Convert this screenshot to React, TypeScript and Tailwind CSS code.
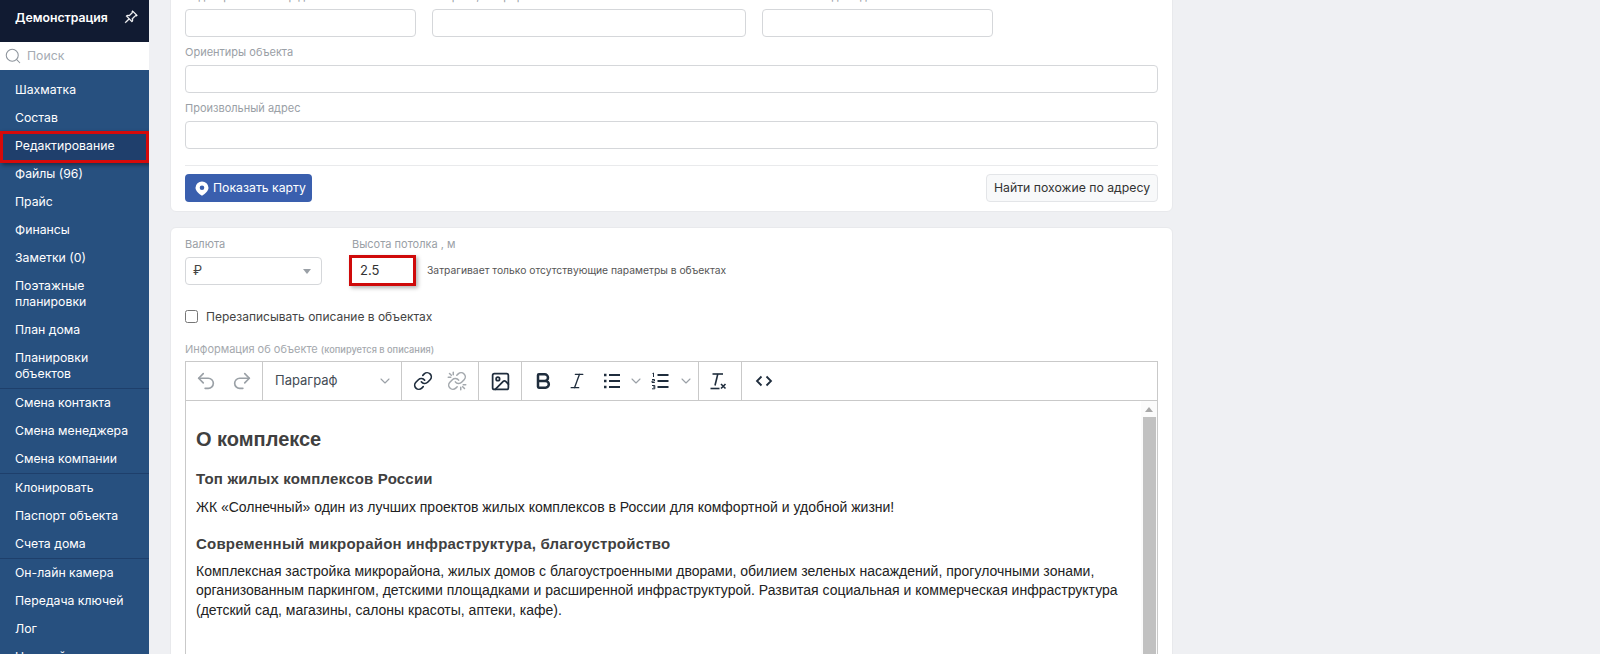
import React from "react";
import { BsPinAngle } from "react-icons/bs";
import { Bold, ChevronDown, Image, Italic, Link, Redo2, Search, Undo2 } from "lucide-react";

const menuGroups = [
  [
    "Шахматка",
    "Состав",
    "Редактирование",
    "Файлы (96)",
    "Прайс",
    "Финансы",
    "Заметки (0)",
    "Поэтажные планировки",
    "План дома",
    "Планировки объектов",
  ],
  ["Смена контакта", "Смена менеджера", "Смена компании"],
  ["Клонировать", "Паспорт объекта", "Счета дома"],
  ["Он-лайн камера", "Передача ключей", "Лог", "Настройки"],
];

const Sidebar: React.FC = () => (
  <aside className="w-[149px] shrink-0 h-full flex flex-col bg-[#27507f] overflow-hidden">
    <div className="h-[42px] shrink-0 bg-[#111b32] flex justify-between pl-[15px] pr-[11px] pt-[10px] text-white">
      <span className="text-[12.25px] leading-[16px] font-semibold">Демонстрация</span>
      <BsPinAngle className="w-[14px] h-[14px]" strokeWidth={0.5} />
    </div>
    <div className="h-[28px] shrink-0 bg-white flex items-center pl-[4px] gap-[5px]">
      <Search className="w-[18px] h-[18px] text-[#8d949c]" strokeWidth={1.4} />
      <span className="text-[12.25px] text-[#a5abb3]">Поиск</span>
    </div>
    <nav className="pt-[6px]">
      {menuGroups.map((group, i) => (
        <div key={i} className="border-b border-[#1e3f6b] last:border-b-0">
          {group.map((item) => {
            const active = item === "Редактирование";
            return (
              <div
                key={item}
                className={
                  active
                    ? "relative bg-[#1f3f6c] px-[15px] py-[6px] text-[12.25px] leading-[16px] text-white"
                    : "px-[15px] py-[6px] text-[12.25px] leading-[16px] text-white"
                }
              >
                {item}
                {active && (
                  <div className="absolute left-0 right-0 -top-[1px] -bottom-[3px] border-[3px] border-[#d60a0a] shadow-[2px_2px_4px_rgba(0,0,0,0.4)]" />
                )}
              </div>
            );
          })}
        </div>
      ))}
    </nav>
  </aside>
);

const Field: React.FC<{ label: string; className?: string }> = ({ label, className }) => (
  <div className={className}>
    <div className="text-[11px] leading-[16px] text-[#9aa0a6] mb-[5px]">{label}</div>
    <div className="h-[28px] bg-white border border-[#d5d7da] rounded-[4px]" />
  </div>
);

const PlaceIcon = () => (
  <svg width="14" height="15" viewBox="0 0 14 15" fill="currentColor">
    <path
      fillRule="evenodd"
      d="M7 .5a6.5 6.5 0 0 1 6.5 6.3c0 3.2-3.6 6.2-6.5 7.9C4.100 13 .5 10 .5 6.800A6.500 6.500 0 0 1 7 .5zm0 4a2.300 2.300 0 1 0 0 4.600 2.300 2.300 0 0 0 0-4.600z"
    />
  </svg>
);

const UnlinkIcon = () => (
  <svg width="20" height="20" viewBox="0 0 24 24" fill="none" stroke="currentColor" strokeWidth="1.8" strokeLinecap="round">
    <path d="M10 13a5 5 0 0 0 7.540.540l3-3a5 5 0 0 0-7.070-7.070l-1.720 1.710" />
    <path d="M14 11a5 5 0 0 0-7.540-.540l-3 3a5 5 0 0 0 7.070 7.070l1.710-1.710" />
    <path d="M7.500 1.500v3M1.500 7.500h3M3 3l2.200 2.200" />
    <path d="M16.500 22.500v-3M22.500 16.500h-3M21 21l-2.200-2.200" />
  </svg>
);

const ListIcon = () => (
  <svg width="20" height="20" viewBox="0 0 20 20" fill="none" stroke="#1f2d3d" strokeWidth="2">
    <path d="M7 4h11M7 10h11M7 16h11" />
    <path d="M2 4h2.500M2 10h2.500M2 16h2.500" strokeWidth="2.500" strokeDasharray="2.500 0" />
  </svg>
);

const OrderedListIcon = () => (
  <svg width="20" height="20" viewBox="0 0 20 20" fill="none" stroke="#1f2d3d">
    <path d="M7.500 4h11M7.500 10h11M7.500 16h11" strokeWidth="2" />
    <path d="M2.500 2.500 3.500 2v4M2 8.500h2.500v1.500H2v1.500h2.800M2 14.500h2.800v1.500H3M4.800 16v1.800H2" strokeWidth="1" />
  </svg>
);

const ClearFormat = () => (
  <svg width="20" height="20" viewBox="0 0 20 20" fill="none" stroke="#1f2d3d" strokeWidth="1.6">
    <path d="M2.500 3h10.500" />
    <path d="M7.800 3 5 14.500" />
    <path d="M.5 17.500h9" />
    <path d="m11 13 4.500 4.500M15.500 13 11 17.500" />
  </svg>
);

const CodeIcon = () => (
  <svg width="20" height="20" viewBox="0 0 20 20" fill="none" stroke="#1f2d3d" strokeWidth="1.8">
    <path d="M7.500 5.500 3 10l4.500 4.500" />
    <path d="M12.500 5.500 17 10l-4.500 4.500" />
  </svg>
);

const Toolbar: React.FC = () => (
  <div className="h-[39px] flex border-b border-[#c9c9c9] text-[#1f2d3d] font-['Inter',sans-serif]">
    <div className="w-[77px] shrink-0 flex items-center pl-[2px] border-r border-[#c9c9c9] text-[#9aa0a6]">
      <div className="w-[36px] flex justify-center">
        <Undo2 className="w-[22px] h-[22px]" strokeWidth={1.8} />
      </div>
      <div className="w-[36px] flex justify-center">
        <Redo2 className="w-[22px] h-[22px]" strokeWidth={1.8} />
      </div>
    </div>
    <div className="w-[139px] shrink-0 flex items-center justify-between pl-[12px] pr-[8px] border-r border-[#c9c9c9]">
      <span className="text-[13px] text-[#444c55]">Параграф</span>
      <ChevronDown className="w-[16px] h-[16px] text-[#9aa0a6]" strokeWidth={1.6} />
    </div>
    <div className="w-[77px] shrink-0 flex items-center pl-[4px] border-r border-[#c9c9c9]">
      <div className="w-[34px] flex justify-center">
        <Link className="w-[20px] h-[20px]" strokeWidth={2} />
      </div>
      <div className="w-[34px] flex justify-center text-[#a3a8ad]">
        <UnlinkIcon />
      </div>
    </div>
    <div className="w-[43px] shrink-0 flex items-center justify-center border-r border-[#c9c9c9]">
      <Image className="w-[21px] h-[21px]" strokeWidth={2} />
    </div>
    <div className="w-[177px] shrink-0 flex items-center pl-[4px] border-r border-[#c9c9c9]">
      <div className="w-[34px] flex justify-center">
        <Bold className="w-[20px] h-[20px]" strokeWidth={3} />
      </div>
      <div className="w-[34px] flex justify-center">
        <Italic className="w-[20px] h-[20px]" strokeWidth={1.6} />
      </div>
      <div className="w-[35px] flex justify-center">
        <ListIcon />
      </div>
      <div className="w-[14px] flex justify-center text-[#9aa0a6]">
        <ChevronDown className="w-[16px] h-[16px] shrink-0" strokeWidth={1.6} />
      </div>
      <div className="w-[34px] flex justify-center">
        <OrderedListIcon />
      </div>
      <div className="w-[18px] flex justify-center text-[#9aa0a6]">
        <ChevronDown className="w-[16px] h-[16px] shrink-0" strokeWidth={1.6} />
      </div>
    </div>
    <div className="w-[43px] shrink-0 flex items-center justify-center border-r border-[#c9c9c9]">
      <ClearFormat />
    </div>
    <div className="w-[43px] shrink-0 flex items-center justify-center">
      <CodeIcon />
    </div>
  </div>
);

const App: React.FC = () => {
  return (
    <div className="h-screen flex overflow-hidden bg-[#eff0f3] font-['Inter',sans-serif]">
      <Sidebar />
      <main className="w-[1003px] shrink-0 ml-[21px] -mt-[27px] flex flex-col gap-[15px]">
        <section className="bg-white border border-[#e8e9ec] rounded-[6px] px-[14px] pt-[14px] pb-[9px]">
          <div className="flex gap-[16px]">
            <Field label="Кадастровый номер дома" className="w-[231px]" />
            <Field label="Квартал, микрорайон" className="w-[314px]" />
            <Field label="Почтовый индекс дома" className="w-[231px]" />
          </div>
          <Field label="Ориентиры объекта" className="mt-[7px]" />
          <Field label="Произвольный адрес" className="mt-[7px]" />
          <div className="mt-[16px] pt-[8px] border-t border-[#e9eaec] flex justify-between">
            <button className="h-[28px] w-[127px] flex items-center gap-[4px] pl-[10px] bg-[#3a5fae] rounded-[4px] text-white text-[12.25px] whitespace-nowrap">
              <PlaceIcon />
              Показать карту
            </button>
            <button className="h-[28px] w-[172px] bg-[#f8f9fa] border border-[#e3e5e8] rounded-[4px] text-[#333] text-[12.25px] whitespace-nowrap">
              Найти похожие по адресу
            </button>
          </div>
        </section>

        <section className="flex-1 bg-white border border-[#e8e9ec] rounded-t-[6px] px-[14px] pt-[8px]">
          <div className="flex">
            <div className="w-[137px]">
              <div className="text-[11px] leading-[16px] text-[#9aa0a6] mb-[5px]">Валюта</div>
              <div className="h-[28px] flex items-center justify-between pl-[7px] pr-[10px] border border-[#d5d7da] rounded-[4px] text-[13px] text-[#444]">
                ₽
                <span className="w-0 h-0 border-x-[4px] border-x-transparent border-t-[5px] border-t-[#9aa0a6]" />
              </div>
            </div>
            <div className="w-[61px] ml-[30px]">
              <div className="text-[11px] leading-[16px] text-[#9aa0a6] mb-[5px] whitespace-nowrap">
                Высота потолка , м
              </div>
              <div className="relative h-[28px] flex items-center pl-[8px] text-[13px] text-[#333]">
                2.5
                <div className="absolute -inset-x-[3px] -top-[2px] -bottom-[1px] border-[3px] border-[#cf0a0a] shadow-[2px_2px_4px_rgba(0,0,0,0.3)]" />
              </div>
            </div>
            <div className="ml-[14px] mt-[21px] h-[28px] flex items-center text-[10.3px] text-[#555]">
              Затрагивает только отсутствующие параметры в объектах
            </div>
          </div>

          <label className="mt-[25px] h-[13px] flex items-center gap-[8px] text-[12px] text-[#444]">
            <input type="checkbox" readOnly className="w-[13px] h-[13px]" />
            Перезаписывать описание в объектах
          </label>

          <div className="mt-[18px] mb-[3px] text-[11px] leading-[16px] text-[#a5a9ae]">
            Информация об объекте <span className="text-[9.25px] font-medium">(копируется в описания)</span>
          </div>

          <div className="border border-[#c9c9c9] h-[400px] font-['Liberation_Sans',sans-serif]">
            <Toolbar />
            <div className="flex h-full">
              <div className="flex-1 pl-[10px] pr-[6px] pt-[25px] text-[14px] leading-[19.6px] text-[#222]">
                <h2 className="text-[20px] leading-[26px] font-bold text-[#404040] mb-[17px]">О комплексе</h2>
                <h3 className="text-[15px] leading-[20px] font-bold tracking-[0.2px] text-[#404040] mb-[9px]">
                  Топ жилых комплексов России
                </h3>
                <p className="mb-[16px]">
                  ЖК «Солнечный» один из лучших проектов жилых комплексов в России для комфортной и удобной жизни!
                </p>
                <h3 className="text-[15px] leading-[20px] font-bold tracking-[0.2px] text-[#404040] mb-[8px]">
                  Современный микрорайон инфраструктура, благоустройство
                </h3>
                <p>
                  Комплексная застройка микрорайона, жилых домов с благоустроенными дворами, обилием зеленых насаждений,
                  прогулочными зонами, организованным паркингом, детскими площадками и расширенной инфраструктурой.
                  Развитая социальная и коммерческая инфраструктура (детский сад, магазины, салоны красоты, аптеки, кафе).
                </p>
              </div>
              <div className="w-[16px] shrink-0 flex flex-col items-center bg-[#fbfbfb]">
                <div className="h-[16px] flex items-center justify-center">
                  <span className="w-0 h-0 border-x-[4px] border-x-transparent border-b-[5px] border-b-[#a8a8a8]" />
                </div>
                <div className="w-[13px] flex-1 bg-[#c1c1c1]" />
              </div>
            </div>
          </div>
        </section>
      </main>
    </div>
  );
};

export default App;
